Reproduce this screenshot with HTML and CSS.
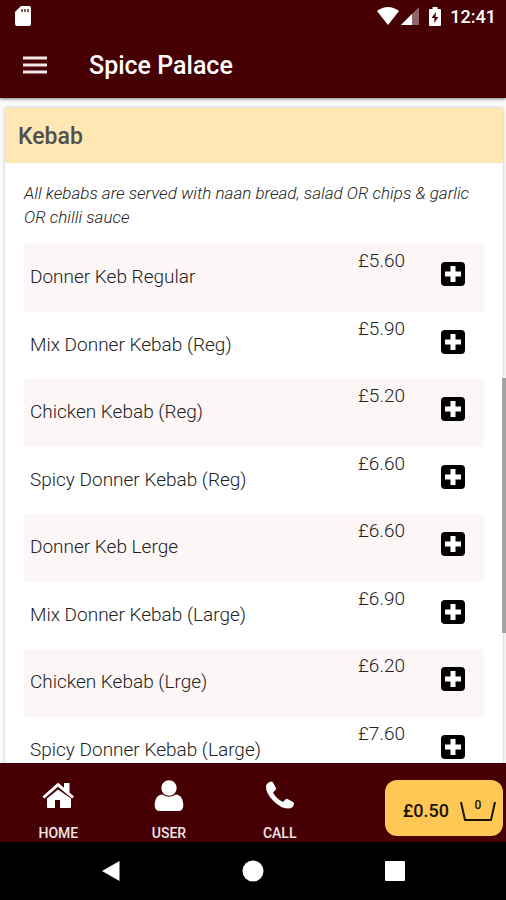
FILE: index.html
```html
<!DOCTYPE html>
<html lang="en">
<head>
	<meta charset="utf-8">
	<meta name="viewport" content="width=device-width, initial-scale=1">
	<title>Spice Palace</title>
	<link rel="stylesheet" href="styles.css">
</head>

<body>
	<svg width="0" height="0" class="sprite" aria-hidden="true">
		<symbol id="plus" viewBox="0 0 24 24">
			<rect width="24" height="24" rx="4" fill="#000"/>
			<path d="M9.500 4h5v5.500H20v5h-5.500V20h-5v-5.500H4v-5h5.500z" fill="#fff"/>
		</symbol>
	</svg>

	<header class="top">
		<div class="status">
			<svg class="sdcard" width="16" height="20" viewBox="0 0 16 20"><path d="M6 0h8a2 2 0 0 1 2 2v16a2 2 0 0 1-2 2H2a2 2 0 0 1-2-2V6z" fill="#fff"/><path d="M7 3v3M10 3v3M13 3v3" stroke="#460003" stroke-width="1.300"/></svg>
			<svg width="22" height="18" viewBox="0 0 22 18"><path d="M0 4Q11-4 22 4L11 18z" fill="#fff"/></svg>
			<svg class="signal" width="18" height="18" viewBox="0 0 18 18"><path d="M18 0v18H0z" fill="#fff" fill-opacity=".4"/><path d="M11 7v11H0z" fill="#fff"/></svg>
			<svg class="battery" width="12" height="19" viewBox="0 0 12 19"><path d="M3.500 0h5v2H11a1 1 0 0 1 1 1v15a1 1 0 0 1-1 1H1a1 1 0 0 1-1-1V3a1 1 0 0 1 1-1h2.500z" fill="#fff"/><path d="M7 5l-4.500 6H5.500L5 16l4.500-6H6.500z" fill="#460003"/></svg>
			<span class="clock">12:41</span>
		</div>
		<div class="titlebar">
			<button class="menubtn" type="button" aria-label="Menu">
				<svg width="24" height="18" viewBox="0 0 24 18"><path d="M0 2h24M0 9h24M0 16h24" stroke="#f3e6e6" stroke-width="3"/></svg>
			</button>
			<h1>Spice Palace</h1>
		</div>
	</header>

	<main class="content">
		<section class="card">
			<h2>Kebab</h2>
			<p class="note">All kebabs are served with naan bread, salad OR chips &amp; garlic OR chilli sauce</p>
			<ul class="items">
				<li><span class="name">Donner Keb Regular</span><span class="price">£5.60</span><button class="add" type="button" aria-label="Add Donner Keb Regular"><svg width="24" height="24"><use href="#plus"/></svg></button></li>
				<li><span class="name">Mix Donner Kebab (Reg)</span><span class="price">£5.90</span><button class="add" type="button" aria-label="Add Mix Donner Kebab (Reg)"><svg width="24" height="24"><use href="#plus"/></svg></button></li>
				<li><span class="name">Chicken Kebab (Reg)</span><span class="price">£5.20</span><button class="add" type="button" aria-label="Add Chicken Kebab (Reg)"><svg width="24" height="24"><use href="#plus"/></svg></button></li>
				<li><span class="name">Spicy Donner Kebab (Reg)</span><span class="price">£6.60</span><button class="add" type="button" aria-label="Add Spicy Donner Kebab (Reg)"><svg width="24" height="24"><use href="#plus"/></svg></button></li>
				<li><span class="name">Donner Keb Lerge</span><span class="price">£6.60</span><button class="add" type="button" aria-label="Add Donner Keb Lerge"><svg width="24" height="24"><use href="#plus"/></svg></button></li>
				<li><span class="name">Mix Donner Kebab (Large)</span><span class="price">£6.90</span><button class="add" type="button" aria-label="Add Mix Donner Kebab (Large)"><svg width="24" height="24"><use href="#plus"/></svg></button></li>
				<li><span class="name">Chicken Kebab (Lrge)</span><span class="price">£6.20</span><button class="add" type="button" aria-label="Add Chicken Kebab (Lrge)"><svg width="24" height="24"><use href="#plus"/></svg></button></li>
				<li><span class="name">Spicy Donner Kebab (Large)</span><span class="price">£7.60</span><button class="add" type="button" aria-label="Add Spicy Donner Kebab (Large)"><svg width="24" height="24"><use href="#plus"/></svg></button></li>
			</ul>
		</section>
		<div class="scrollthumb"></div>
	</main>

	<footer class="tabs">
		<a href="#home" class="tab">
			<svg width="32" height="32" viewBox="0 0 32 32" fill="#fff"><path d="M16 9.500L5 18.500V27a1 1 0 0 0 1 1h7v-8h5v8h10a1 1 0 0 0 1-1v-8.500z"/><path d="M.5 16.500L15 3.500q1-.8 2 0l5 4.300V3h5.500v9.500l4.500 4-1.800 2L16 6.800 2.300 18.500z"/></svg>
			<span>HOME</span>
		</a>
		<a href="#user" class="tab">
			<svg width="32" height="32" viewBox="0 0 32 32" fill="#fff"><circle cx="16" cy="8" r="7.700"/><path d="M9.500 14.500Q16 19 22.500 14.500C28 14.500 30.500 20 30.300 26Q30 31 25 31H7Q2 31 1.700 26C1.500 20 4 14.500 9.500 14.500z"/></svg>
			<span>USER</span>
		</a>
		<a href="#call" class="tab">
			<svg width="32" height="32" viewBox="0 0 32 32" fill="#fff"><path d="M2 6Q3 2 7.500 1.500q1 0 1.500 1l3 5.500q.5 1-.3 1.800L9 12.500q3.500 6.500 10 9.500l2.700-2.700q.8-.8 1.800-.2l5.500 3q1.300.8 1 2-1 4.500-6 4.500-7 0-14.500-7.500Q1.500 13 2 6z"/></svg>
			<span>CALL</span>
		</a>
		<button class="basket" type="button">
			<span class="total">£0.50</span>
			<span class="count">0
				<svg width="36" height="21" viewBox="0 0 36 21" fill="none" stroke="#1c1400" stroke-width="2"><path d="M1 1l4 18h26l4-18"/></svg>
			</span>
		</button>
	</footer>

	<nav class="sysnav">
		<button type="button" aria-label="Back"><svg width="22" height="22" viewBox="0 0 22 22"><path d="M2 11L19.500 1v20z" fill="#fff"/></svg></button>
		<button type="button" aria-label="Home"><svg width="22" height="22" viewBox="0 0 22 22"><circle cx="11" cy="11" r="10.500" fill="#fff"/></svg></button>
		<button type="button" aria-label="Recent"><svg width="22" height="22" viewBox="0 0 22 22"><rect x="1" y="1" width="20" height="20" rx="1" fill="#fff"/></svg></button>
	</nav>
</body>
</html>
```
FILE: styles.css
```css
*{
	box-sizing:border-box;
	margin:0;
	padding:0;
}

body{
	display:flex;
	flex-direction:column;
	height:100vh;
	overflow:hidden;
	background-color:#fff;
	font-family:Roboto, "Liberation Sans", sans-serif;
	color:#222;
}

button{
	border:0;
	background:none;
	font-family:inherit;
	cursor:pointer;
}

svg{
	display:block;
}

.sprite{
	position:absolute;
}

.top{
	height:98px;
	flex:none;
	background-color:#460003;
	color:#fff;
	box-shadow:0 1px 3px rgba(0,0,0,0.5);
	z-index:1;
}

.status{
	display:flex;
	align-items:center;
	height:32px;
	padding:0 10px 0 15px;
}

.sdcard{
	margin-right:auto;
}

.signal{
	margin-left:2px;
}

.battery{
	margin:0 9px 0 10px;
}

.clock{
	font-size:18px;
	font-weight:500;
}

.titlebar{
	display:flex;
	align-items:center;
	height:66px;
	padding-left:23px;
}

h1{
	margin-left:42px;
	font-size:25px;
	font-weight:500;
}

.content{
	position:relative;
	flex:1;
	min-height:0;
	overflow:hidden;
	padding:10px 3px 0 5px;
	background-color:#fafafb;
}

.card{
	background-color:#fff;
	box-shadow:0 0 3px rgba(0,0,0,0.25);
}

h2{
	padding:13px 13px 11px;
	background-color:#ffe7b3;
	font-size:23px;
	line-height:31px;
	font-weight:500;
	color:#505050;
}

.note{
	padding:18px 19px 15px;
	font-size:17px;
	line-height:24px;
	font-style:italic;
	font-weight:300;
	color:#222;
}

.items{
	list-style:none;
	padding:0 19px;
}

.items li{
	display:flex;
	align-items:flex-start;
	height:68px;
	padding:0 19px 0 6px;
	font-size:19px;
	line-height:24px;
	font-weight:300;
}

.items li:nth-child(odd){
	background-color:#fcf6f6;
}

.items li:nth-child(even){
	height:67px;
}

.name{
	flex:1;
	margin-top:21px;
}

.price{
	width:83px;
	margin-top:5px;
}

.add{
	margin-top:18px;
}

.scrollthumb{
	position:absolute;
	right:0;
	top:280px;
	width:4px;
	height:255px;
	background-color:#a3a3a3;
}

.tabs{
	display:flex;
	flex:none;
	height:79px;
	padding:17px 3px 0;
	background-color:#460003;
}

.tab{
	display:flex;
	flex-direction:column;
	align-items:center;
	flex:1;
	font-size:14px;
	line-height:16px;
	font-weight:500;
	color:#f3e6e6;
	text-decoration:none;
}

.tab span{
	margin-top:13px;
}

.basket{
	display:flex;
	align-items:center;
	justify-content:flex-end;
	gap:11px;
	width:118px;
	height:56px;
	margin-left:50px;
	padding:4px 7px 0 0;
	border-radius:12px;
	background-color:#ffc754;
	color:#1c1400;
}

.total{
	font-size:18px;
	font-weight:500;
}

.count{
	display:grid;
	justify-items:center;
	font-size:12px;
	line-height:12px;
	font-weight:500;
}

.count svg{
	margin-top:-10px;
}

.sysnav{
	display:flex;
	justify-content:center;
	gap:120px;
	flex:none;
	height:58px;
	background-color:#000;
}
```
